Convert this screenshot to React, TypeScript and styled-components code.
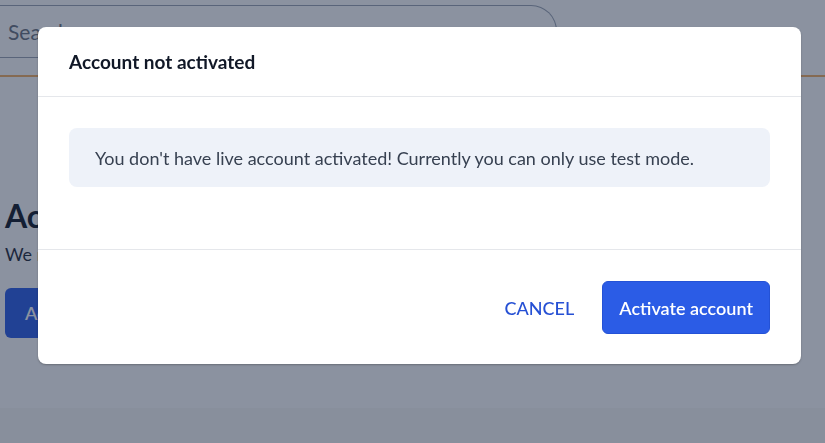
import styled, { createGlobalStyle } from 'styled-components';

const GlobalStyle = createGlobalStyle`
  html, body {
    margin: 0;
    padding: 0;
    height: 100%;
  }

  body {
    font-family: Lato, "Noto Sans", sans-serif;
    color: #111827;
    background: #ffffff;
    overflow: hidden;
  }

  #root {
    height: 100%;
  }
`;

const Page = styled.div`
  position: relative;
  height: 443px;
  display: flex;
  flex-direction: column;
  background: #ffffff;
`;

const TopBar = styled.header`
  height: 77px;
  border-bottom: 2px solid #f3ae63;
  box-sizing: border-box;
  padding-top: 5px;
`;

const SearchInput = styled.div`
  width: 557px;
  height: 53px;
  box-sizing: border-box;
  border: 1px solid #9aa3b2;
  border-left: none;
  border-radius: 0 26px 26px 0;
  display: flex;
  align-items: center;
  padding-left: 8px;
  font-size: 21px;
  color: #6b7280;
`;

const Content = styled.main`
  flex: 1;
  padding: 119px 5px 0;
`;

const PageTitle = styled.h1`
  margin: 0;
  font-size: 32px;
  font-weight: 700;
  line-height: 40px;
  color: #111827;
`;

const PageText = styled.p`
  margin: 6px 0 0;
  font-size: 18px;
  line-height: 24px;
  color: #1f2937;
`;

const PageButton = styled.button`
  margin-top: 22px;
  height: 50px;
  width: 180px;
  border: none;
  border-radius: 6px;
  background: #2b5ce6;
  color: #ffffff;
  font-family: inherit;
  font-size: 18px;
  font-weight: 600;
  text-align: left;
  padding-left: 20px;
`;

const PageFooter = styled.footer`
  height: 35px;
  background: #f9f9f7;
`;

const Backdrop = styled.div`
  position: fixed;
  inset: 0;
  background: rgba(23, 37, 65, 0.5);
  display: flex;
  justify-content: center;
  align-items: flex-start;
  padding-top: 27px;
`;

const Modal = styled.div`
  width: 763px;
  background: #ffffff;
  border-radius: 8px;
  box-shadow: 0 1px 2px rgba(0, 0, 0, 0.25);
  display: flex;
  flex-direction: column;
  margin-left: 14px;
`;

const ModalHeader = styled.div`
  height: 70px;
  box-sizing: border-box;
  border-bottom: 1px solid #e5e7eb;
  display: flex;
  align-items: center;
  padding: 0 31px;
`;

const ModalTitle = styled.h2`
  margin: 0;
  font-size: 19px;
  font-weight: 700;
  color: #111827;
`;

const ModalBody = styled.div`
  padding: 31px 31px 62px;
  border-bottom: 1px solid #e5e7eb;
`;

const Notice = styled.div`
  background: #eef2f9;
  border-radius: 8px;
  height: 59px;
  display: flex;
  align-items: center;
  padding: 0 26px;
  font-size: 18px;
  color: #374151;
`;

const ModalFooter = styled.div`
  display: flex;
  justify-content: flex-end;
  align-items: center;
  gap: 11px;
  padding: 31px 31px 30px;
`;

const Button = styled.button<{ $primary?: boolean }>`
  height: 53px;
  box-sizing: border-box;
  border-radius: 6px;
  font-family: inherit;
  font-size: 18px;
  cursor: pointer;
  padding: 0 16px;
  border: 1px solid ${(p) => (p.$primary ? '#2452d6' : 'transparent')};
  background: ${(p) => (p.$primary ? '#2b5ce6' : 'transparent')};
  color: ${(p) => (p.$primary ? '#ffffff' : '#2650d4')};
  font-weight: ${(p) => (p.$primary ? 600 : 500)};
  text-transform: ${(p) => (p.$primary ? 'none' : 'uppercase')};
  min-width: ${(p) => (p.$primary ? '167px' : 'auto')};
`;

export default function App() {
  return (
    <>
      <GlobalStyle />
      <Page>
        <TopBar>
          <SearchInput>Search</SearchInput>
        </TopBar>
        <Content>
          <PageTitle>Activate your account</PageTitle>
          <PageText>We need a few details before you can go live.</PageText>
          <PageButton>Activate account</PageButton>
        </Content>
        <PageFooter />
        <Backdrop>
          <Modal role="dialog" aria-labelledby="modal-title">
            <ModalHeader>
              <ModalTitle id="modal-title">Account not activated</ModalTitle>
            </ModalHeader>
            <ModalBody>
              <Notice>
                You don't have live account activated! Currently you can only use test mode.
              </Notice>
            </ModalBody>
            <ModalFooter>
              <Button>Cancel</Button>
              <Button $primary>Activate account</Button>
            </ModalFooter>
          </Modal>
        </Backdrop>
      </Page>
    </>
  );
}
